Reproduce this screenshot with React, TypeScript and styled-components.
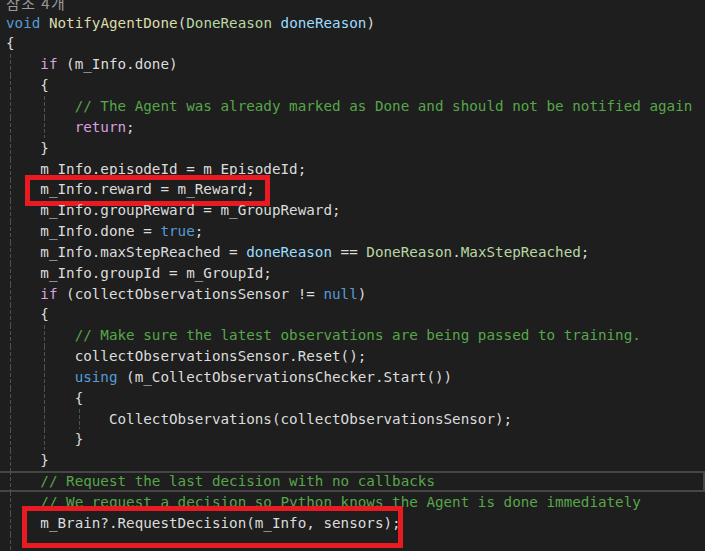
import React from "react";
import styled, { createGlobalStyle } from "styled-components";

const Global = createGlobalStyle`
  html, body {
    margin: 0;
    padding: 0;
    background: #1e1e1e;
    overflow: hidden;
  }
  #root {
    width: 705px;
    height: 551px;
    overflow: hidden;
  }
`;

type Kind = "p" | "kw" | "ctl" | "fn" | "en" | "pr" | "cm";

const colors: Record<Kind, string> = {
  p: "#dcdcdc",
  kw: "#569cd6",
  ctl: "#d8a0df",
  fn: "#dcdcaa",
  en: "#b8d7a3",
  pr: "#9cdcfe",
  cm: "#57a64a",
};

const Editor = styled.div`
  width: 705px;
  height: 551px;
  background: #1e1e1e;
  display: flex;
  flex-direction: column;
  font-family: "DejaVu Sans Mono", "Liberation Mono", monospace;
  font-size: 14.25px;
`;

const CodeLens = styled.div`
  height: 12.6px;
  flex: none;
  overflow: hidden;
  display: flex;
  align-items: flex-end;
  padding: 0 0 3px 6px;
  box-sizing: border-box;
  font-family: "Noto Sans CJK KR", "Noto Sans", sans-serif;
  font-size: 15px;
  line-height: 15px;
  letter-spacing: 1.4px;
  white-space: pre;
  color: #999999;
`;

const Line = styled.div<{ $current?: boolean }>`
  flex: none;
  height: 20.85px;
  line-height: 20.85px;
  display: flex;
  padding-left: 6px;
  box-sizing: border-box;
  white-space: pre;
  ${(p) =>
    p.$current
      ? `box-shadow: inset 0 2px 0 #464646, inset 0 -2px 0 #464646, inset -2px 0 0 #464646;`
      : ""}
`;

const Indent = styled.span`
  flex: none;
  width: 4ch;
  height: 100%;
  background-image: repeating-linear-gradient(
    to bottom,
    #505050 0px,
    #505050 4px,
    transparent 4px,
    transparent 6px
  );
  background-size: 1px 100%;
  background-repeat: no-repeat;
  background-position: 4px 0;
`;

const Code = styled.span`
  flex: none;
  position: relative;
`;

const Marked = styled(Code)<{ $l: number; $r: number; $t: number; $b: number }>`
  &::after {
    content: "";
    position: absolute;
    left: ${(p) => p.$l}px;
    right: ${(p) => p.$r}px;
    top: ${(p) => p.$t}px;
    bottom: ${(p) => p.$b}px;
    border: 5px solid #e81b23;
    pointer-events: none;
  }
`;

const Tok = styled.span<{ $kind: Kind }>`
  color: ${(p) => colors[p.$kind]};
`;

type Box = { l: number; r: number; t: number; b: number };
type Row = {
  indent: number;
  toks: [Kind, string][];
  box?: Box;
  current?: boolean;
};

const p = (s: string): [Kind, string] => ["p", s];

const rows: Row[] = [
  {
    indent: 0,
    toks: [
      ["kw", "void"],
      p(" "),
      ["fn", "NotifyAgentDone"],
      p("("),
      ["en", "DoneReason"],
      p(" "),
      ["pr", "doneReason"],
      p(")"),
    ],
  },
  { indent: 0, toks: [p("{")] },
  { indent: 1, toks: [["ctl", "if"], p(" (m_Info.done)")] },
  { indent: 1, toks: [p("{")] },
  {
    indent: 2,
    toks: [["cm", "// The Agent was already marked as Done and should not be notified again"]],
  },
  { indent: 2, toks: [["ctl", "return"], p(";")] },
  { indent: 1, toks: [p("}")] },
  { indent: 1, toks: [p("m_Info.episodeId = m_EpisodeId;")] },
  {
    indent: 1,
    toks: [p("m_Info.reward = m_Reward;")],
    box: { l: -15.4, r: -15.4, t: -4.4, b: -5.7 },
  },
  { indent: 1, toks: [p("m_Info.groupReward = m_GroupReward;")] },
  { indent: 1, toks: [p("m_Info.done = "), ["kw", "true"], p(";")] },
  {
    indent: 1,
    toks: [
      p("m_Info.maxStepReached = "),
      ["pr", "doneReason"],
      p(" == "),
      ["en", "DoneReason"],
      p("."),
      ["en", "MaxStepReached"],
      p(";"),
    ],
  },
  { indent: 1, toks: [p("m_Info.groupId = m_GroupId;")] },
  {
    indent: 1,
    toks: [["ctl", "if"], p(" (collectObservationsSensor != "), ["kw", "null"], p(")")],
  },
  { indent: 1, toks: [p("{")] },
  {
    indent: 2,
    toks: [["cm", "// Make sure the latest observations are being passed to training."]],
  },
  { indent: 2, toks: [p("collectObservationsSensor.Reset();")] },
  {
    indent: 2,
    toks: [["kw", "using"], p(" (m_CollectObservationsChecker.Start())")],
  },
  { indent: 2, toks: [p("{")] },
  { indent: 3, toks: [p("CollectObservations(collectObservationsSensor);")] },
  { indent: 2, toks: [p("}")] },
  { indent: 1, toks: [p("}")] },
  {
    indent: 1,
    toks: [["cm", "// Request the last decision with no callbacks"]],
    current: true,
  },
  {
    indent: 1,
    toks: [["cm", "// We request a decision so Python knows the Agent is done immediately"]],
  },
  {
    indent: 1,
    toks: [p("m_Brain?.RequestDecision(m_Info, sensors);")],
    box: { l: -18, r: -2, t: -7, b: -14 },
  },
  { indent: 1, toks: [] },
];

function CodeRow({ row }: { row: Row }) {
  const content = row.toks.map(([k, s], i) => (
    <Tok key={i} $kind={k}>
      {s}
    </Tok>
  ));
  return (
    <Line $current={row.current}>
      {Array.from({ length: row.indent }).map((_, i) => (
        <Indent key={i} />
      ))}
      {row.box ? (
        <Marked $l={row.box.l} $r={row.box.r} $t={row.box.t} $b={row.box.b}>
          {content}
        </Marked>
      ) : (
        <Code>{content}</Code>
      )}
    </Line>
  );
}

export default function App() {
  return (
    <>
      <Global />
      <Editor>
        <CodeLens>참조 4개</CodeLens>
        {rows.map((r, i) => (
          <CodeRow key={i} row={r} />
        ))}
      </Editor>
    </>
  );
}
